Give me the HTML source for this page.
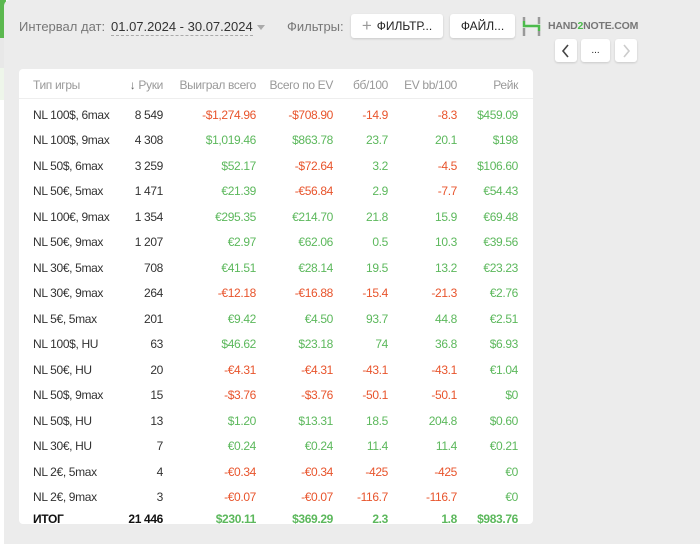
<!DOCTYPE html>
<html><head><meta charset="utf-8"><style>
*{margin:0;padding:0;box-sizing:border-box}
body{width:700px;height:544px;background:#fff;font-family:"Liberation Sans",sans-serif;position:relative;overflow:hidden}
.strip1{position:absolute;left:0;top:0;width:6px;height:38px;background:#5bb84f}
.strip2{position:absolute;left:0;top:38px;width:6px;height:30px;background:#e8e8e8}
.strip3{position:absolute;left:0;top:68px;width:6px;height:32px;background:#eef6ea}
.panel{position:absolute;left:4px;top:0;width:700px;height:544px;background:#ececec;border-radius:6px 0 0 0}
.t{position:absolute;font-size:13px;color:#777;white-space:nowrap}
.btn{position:absolute;background:#fff;border-radius:3px;box-shadow:0 1px 2px rgba(0,0,0,.15);font-size:12px;color:#222;display:flex;align-items:center;justify-content:center}
.box{position:absolute;left:19px;top:69px;width:514px;height:455px;background:#fff;border-radius:4px}
.r{position:absolute;left:19px;width:514px;height:25px;font-size:12px;letter-spacing:-.35px}
.r span{position:absolute;top:6px;text-align:right;white-space:nowrap}
.c0{left:14px;text-align:left!important;color:#333}
.c1{right:370px;color:#333}.c2{right:277px}.c3{right:200px}.c4{right:145px}.c5{right:76px}.c6{right:15px}
.g{color:#5cb85c}.d{color:#e8542c}
.h span{color:#999}
.tot span{font-weight:bold;color:#111}
.tot .g{color:#5cb85c}
</style></head><body>
<div class="strip1"></div><div class="strip2"></div><div class="strip3"></div>
<div class="panel"></div>
<div class="t" style="left:19px;top:19px">Интервал дат:</div>
<div class="t" style="left:111px;top:19px;color:#333;border-bottom:1px dashed #aaa;padding-bottom:1px">01.07.2024 - 30.07.2024</div>
<div style="position:absolute;left:257px;top:25px;border:4px solid transparent;border-top:5px solid #aaa"></div>
<div class="t" style="left:287px;top:19px">Фильтры:</div>
<div class="btn" style="left:351px;top:14px;width:92px;height:24px"><span style="color:#999;font-size:17px;margin-right:5px">+</span>ФИЛЬТР...</div>
<div class="btn" style="left:450px;top:14px;width:65px;height:24px">ФАЙЛ...</div>
<svg style="position:absolute;left:522px;top:16px" width="20" height="22"><path d="M2 1v4M2 12v8M17 1v7M17 15v5" stroke="#999" stroke-width="2.5"/><path d="M2 5v5h15v5" stroke="#4cbb4c" stroke-width="2.5" fill="none"/></svg>
<div style="position:absolute;left:548px;top:20px;font-size:10.5px;font-weight:bold;color:#777;letter-spacing:-.2px">HAND<span style="color:#4cbb4c">2</span>NOTE.COM</div>
<div class="btn" style="left:555px;top:39px;width:22px;height:23px"><svg width="10" height="14"><path d="M7 1L2 7l5 6" stroke="#444" stroke-width="1.6" fill="none"/></svg></div>
<div class="btn" style="left:581px;top:39px;width:29px;height:23px;font-size:10px">...</div>
<div class="btn" style="left:615px;top:39px;width:22px;height:23px"><svg width="10" height="14"><path d="M3 1l5 6-5 6" stroke="#ccc" stroke-width="1.6" fill="none"/></svg></div>
<div class="box"></div>
<div style="position:absolute;left:19px;top:98px;width:514px;height:1px;background:#eee"></div>
<div class="r h" style="top:72px"><span class="c0" style="color:#999">Тип игры</span><span class="c1" style="color:#999"><b style="color:#666">&#8595;</b> Руки</span><span class="c2">Выиграл всего</span><span class="c3">Всего по EV</span><span class="c4">бб/100</span><span class="c5">EV bb/100</span><span class="c6">Рейк</span></div>
<div class="r" style="top:102px"><span class="c0">NL 100$, 6max</span><span class="c1">8 549</span><span class="c2 d">-$1,274.96</span><span class="c3 d">-$708.90</span><span class="c4 d">-14.9</span><span class="c5 d">-8.3</span><span class="c6 g">$459.09</span></div>
<div class="r" style="top:127px"><span class="c0">NL 100$, 9max</span><span class="c1">4 308</span><span class="c2 g">$1,019.46</span><span class="c3 g">$863.78</span><span class="c4 g">23.7</span><span class="c5 g">20.1</span><span class="c6 g">$198</span></div>
<div class="r" style="top:153px"><span class="c0">NL 50$, 6max</span><span class="c1">3 259</span><span class="c2 g">$52.17</span><span class="c3 d">-$72.64</span><span class="c4 g">3.2</span><span class="c5 d">-4.5</span><span class="c6 g">$106.60</span></div>
<div class="r" style="top:178px"><span class="c0">NL 50€, 5max</span><span class="c1">1 471</span><span class="c2 g">€21.39</span><span class="c3 d">-€56.84</span><span class="c4 g">2.9</span><span class="c5 d">-7.7</span><span class="c6 g">€54.43</span></div>
<div class="r" style="top:204px"><span class="c0">NL 100€, 9max</span><span class="c1">1 354</span><span class="c2 g">€295.35</span><span class="c3 g">€214.70</span><span class="c4 g">21.8</span><span class="c5 g">15.9</span><span class="c6 g">€69.48</span></div>
<div class="r" style="top:229px"><span class="c0">NL 50€, 9max</span><span class="c1">1 207</span><span class="c2 g">€2.97</span><span class="c3 g">€62.06</span><span class="c4 g">0.5</span><span class="c5 g">10.3</span><span class="c6 g">€39.56</span></div>
<div class="r" style="top:255px"><span class="c0">NL 30€, 5max</span><span class="c1">708</span><span class="c2 g">€41.51</span><span class="c3 g">€28.14</span><span class="c4 g">19.5</span><span class="c5 g">13.2</span><span class="c6 g">€23.23</span></div>
<div class="r" style="top:280px"><span class="c0">NL 30€, 9max</span><span class="c1">264</span><span class="c2 d">-€12.18</span><span class="c3 d">-€16.88</span><span class="c4 d">-15.4</span><span class="c5 d">-21.3</span><span class="c6 g">€2.76</span></div>
<div class="r" style="top:306px"><span class="c0">NL 5€, 5max</span><span class="c1">201</span><span class="c2 g">€9.42</span><span class="c3 g">€4.50</span><span class="c4 g">93.7</span><span class="c5 g">44.8</span><span class="c6 g">€2.51</span></div>
<div class="r" style="top:331px"><span class="c0">NL 100$, HU</span><span class="c1">63</span><span class="c2 g">$46.62</span><span class="c3 g">$23.18</span><span class="c4 g">74</span><span class="c5 g">36.8</span><span class="c6 g">$6.93</span></div>
<div class="r" style="top:357px"><span class="c0">NL 50€, HU</span><span class="c1">20</span><span class="c2 d">-€4.31</span><span class="c3 d">-€4.31</span><span class="c4 d">-43.1</span><span class="c5 d">-43.1</span><span class="c6 g">€1.04</span></div>
<div class="r" style="top:382px"><span class="c0">NL 50$, 9max</span><span class="c1">15</span><span class="c2 d">-$3.76</span><span class="c3 d">-$3.76</span><span class="c4 d">-50.1</span><span class="c5 d">-50.1</span><span class="c6 g">$0</span></div>
<div class="r" style="top:408px"><span class="c0">NL 50$, HU</span><span class="c1">13</span><span class="c2 g">$1.20</span><span class="c3 g">$13.31</span><span class="c4 g">18.5</span><span class="c5 g">204.8</span><span class="c6 g">$0.60</span></div>
<div class="r" style="top:433px"><span class="c0">NL 30€, HU</span><span class="c1">7</span><span class="c2 g">€0.24</span><span class="c3 g">€0.24</span><span class="c4 g">11.4</span><span class="c5 g">11.4</span><span class="c6 g">€0.21</span></div>
<div class="r" style="top:459px"><span class="c0">NL 2€, 5max</span><span class="c1">4</span><span class="c2 d">-€0.34</span><span class="c3 d">-€0.34</span><span class="c4 d">-425</span><span class="c5 d">-425</span><span class="c6 g">€0</span></div>
<div class="r" style="top:484px"><span class="c0">NL 2€, 9max</span><span class="c1">3</span><span class="c2 d">-€0.07</span><span class="c3 d">-€0.07</span><span class="c4 d">-116.7</span><span class="c5 d">-116.7</span><span class="c6 g">€0</span></div>
<div class="r tot" style="top:506px"><span class="c0">ИТОГ</span><span class="c1">21 446</span><span class="c2 g">$230.11</span><span class="c3 g">$369.29</span><span class="c4 g">2.3</span><span class="c5 g">1.8</span><span class="c6 g">$983.76</span></div>
</body></html>
